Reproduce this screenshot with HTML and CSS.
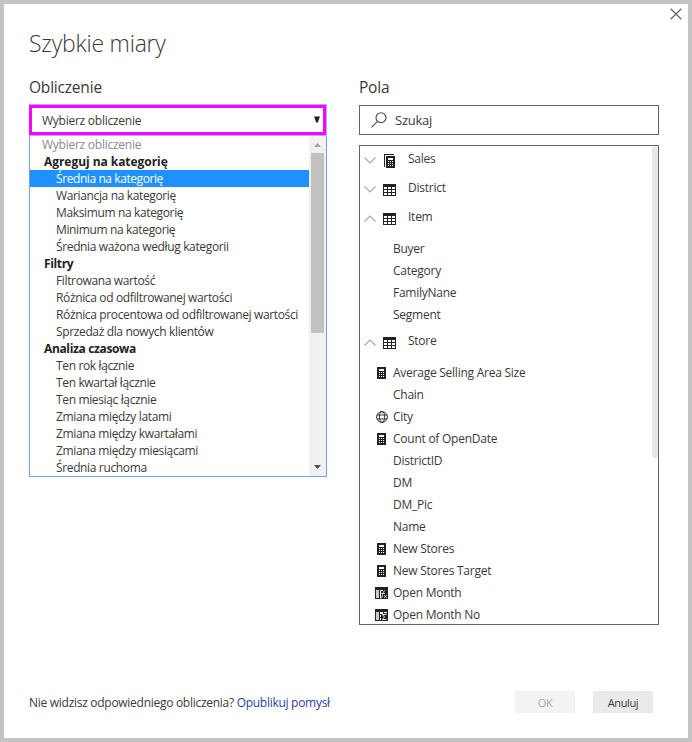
FILE: index.html
```html
<!DOCTYPE html>
<html lang="pl">
<head>
<meta charset="utf-8">
<title>Szybkie miary</title>
<link rel="stylesheet" href="styles.css">
</head>
<body>
<svg class="defs" width="0" height="0" aria-hidden="true">
  <symbol id="calc" viewBox="0 0 9 12"><path fill="#222" d="M0 0h9v12H0z"/><path fill="#fff" d="M2 2h5v2H2zM2 5h1v1H2zM4 5h1v1H4zM6 5h1v1H6zM2 7h1v1H2zM4 7h1v1H4zM6 7h1v1H6zM2 9h1v1H2zM4 9h1v1H4zM6 9h1v1H6z"/></symbol>
  <symbol id="table" viewBox="0 0 13 12"><path fill="#222" d="M0 0h13v12H0z"/><path fill="#fff" d="M1 3h3v2H1zM5 3h3v2H5zM9 3h3v2H9zM1 6h3v2H1zM5 6h3v2H5zM9 6h3v2H9zM1 9h3v2H1zM5 9h3v2H5zM9 9h3v2H9z"/></symbol>
  <symbol id="measures" viewBox="0 0 13 14"><path fill="#222" d="M1 0h10v1H2v12H1zM3 2h9v12H3z"/><path fill="#fff" d="M5 4h5v2H5zM5 7h1v1H5zM7 7h1v1H7zM9 7h1v1H9zM5 9h1v1H5zM7 9h1v1H7zM9 9h1v1H9zM5 11h1v1H5zM7 11h1v1H7zM9 11h1v1H9z"/></symbol>
  <symbol id="down" viewBox="0 0 12 7"><path d="M.5.5 6 6 11.500.5" fill="none" stroke="#aaa" stroke-width="1.200"/></symbol>
  <symbol id="up" viewBox="0 0 12 7"><path d="M.5 6.500 6 1l5.500 5.500" fill="none" stroke="#aaa" stroke-width="1.200"/></symbol>
  <symbol id="globe" viewBox="0 0 12 12"><g fill="none" stroke="#333"><circle cx="6" cy="6" r="5.400"/><ellipse cx="6" cy="6" rx="2.700" ry="5.400"/><path d="M1 4h10M1 8h10"/></g></symbol>
  <symbol id="fx" viewBox="0 0 13 12"><path fill="#222" d="M0 0h13v12H0z"/><path fill="#ccc" d="M1 3h3v8H1z"/><path fill="#fff" d="M5 3h3v1H5zM5 4h1v7H5z"/><path d="M6 11.500q1.300-.5 1.600-4T10 3.500M6.500 6.500H10M9 8l3 3M12 8l-3 3" fill="none" stroke="#ddd" stroke-width=".9"/></symbol>
  <symbol id="sum" viewBox="0 0 13 12"><path fill="#222" d="M0 0h13v12H0z"/><path fill="#ccc" d="M1 3h3v8H1z"/><path fill="#fff" d="M5 3h3v2H5zM9 3h3v1H9zM5 6h1v2H5zM5 9h1v2H5z"/><path d="M11.500 5.500H7.500L9.500 8l-2 2.500h4" fill="none" stroke="#eee"/></symbol>
</svg>
<main class="dialog">
  <button class="close" aria-label="Zamknij"><svg width="12" height="12" viewBox="0 0 12 12"><path d="M.7.7l10.600 10.600M11.300.7.7 11.300" stroke="#666" stroke-width="1.300"/></svg></button>
  <h1>Szybkie miary</h1>
  <div class="columns">
    <section class="calculation">
      <h2>Obliczenie</h2>
      <div class="select-frame"><div class="select"><span>Wybierz obliczenie</span><svg width="6" height="7" viewBox="0 0 6 7"><path d="M0 .5h6L3.800 6.500H2.200z" fill="#222"/></svg></div></div>
      <div class="dropdown">
        <ul class="options">
          <li class="placeholder">Wybierz obliczenie</li>
          <li class="group wide">Agreguj na kategorię</li>
          <li class="selected">Średnia na kategorię</li>
          <li>Wariancja na kategorię</li>
          <li>Maksimum na kategorię</li>
          <li>Minimum na kategorię</li>
          <li>Średnia ważona według kategorii</li>
          <li class="group">Filtry</li>
          <li>Filtrowana wartość</li>
          <li>Różnica od odfiltrowanej wartości</li>
          <li>Różnica procentowa od odfiltrowanej wartości</li>
          <li>Sprzedaż dla nowych klientów</li>
          <li class="group">Analiza czasowa</li>
          <li>Ten rok łącznie</li>
          <li>Ten kwartał łącznie</li>
          <li>Ten miesiąc łącznie</li>
          <li>Zmiana między latami</li>
          <li>Zmiana między kwartałami</li>
          <li>Zmiana między miesiącami</li>
          <li>Średnia ruchoma</li>
        </ul>
        <div class="scrollbar">
          <svg width="7" height="4" viewBox="0 0 7 4"><path d="M0 4 3.500 0 7 4z" fill="#a3a3a3"/></svg>
          <div class="thumb"></div>
          <svg width="7" height="4" viewBox="0 0 7 4"><path d="M0 0h7L3.500 4z" fill="#505050"/></svg>
        </div>
      </div>
    </section>
    <section class="fields">
      <h2>Pola</h2>
      <div class="search"><svg width="16" height="16" viewBox="0 0 16 16"><g fill="none" stroke="#444" stroke-width="1.100"><circle cx="10" cy="5.700" r="5"/><path d="M6.500 9.300.5 15.300"/></g></svg><span>Szukaj</span></div>
      <div class="tree">
        <div class="nodes">
          <div class="node"><svg class="chev"><use href="#down"/></svg><svg class="kind measures"><use href="#measures"/></svg><span>Sales</span></div>
          <div class="node"><svg class="chev"><use href="#down"/></svg><svg class="kind"><use href="#table"/></svg><span>District</span></div>
          <div class="node"><svg class="chev"><use href="#up"/></svg><svg class="kind"><use href="#table"/></svg><span>Item</span></div>
          <ul class="children">
            <li><span>Buyer</span></li>
            <li><span>Category</span></li>
            <li><span>FamilyNane</span></li>
            <li><span>Segment</span></li>
          </ul>
          <div class="node"><svg class="chev"><use href="#up"/></svg><svg class="kind"><use href="#table"/></svg><span>Store</span></div>
          <ul class="children">
            <li><svg class="calc"><use href="#calc"/></svg><span>Average Selling Area Size</span></li>
            <li><span>Chain</span></li>
            <li><svg class="globe"><use href="#globe"/></svg><span>City</span></li>
            <li><svg class="calc"><use href="#calc"/></svg><span>Count of OpenDate</span></li>
            <li><span>DistrictID</span></li>
            <li><span>DM</span></li>
            <li><span>DM_Pic</span></li>
            <li><span>Name</span></li>
            <li><svg class="calc"><use href="#calc"/></svg><span>New Stores</span></li>
            <li><svg class="calc"><use href="#calc"/></svg><span>New Stores Target</span></li>
            <li><svg class="column"><use href="#fx"/></svg><span>Open Month</span></li>
            <li><svg class="column"><use href="#sum"/></svg><span>Open Month No</span></li>
          </ul>
        </div>
        <div class="tree-thumb"></div>
      </div>
    </section>
  </div>
  <footer>
    <p>Nie widzisz odpowiedniego obliczenia? <a>Opublikuj pomysł</a></p>
    <button class="btn ok" disabled>OK</button>
    <button class="btn">Anuluj</button>
  </footer>
</main>
</body>
</html>
```
FILE: styles.css
```css
* { box-sizing: border-box; }
body { margin: 0; font: 12px/17px "Open Sans", "Noto Sans", sans-serif; color: #3a3a3a; letter-spacing: -0.25px; }
svg { display: block; flex: none; }
.defs { position: absolute; }
ul { list-style: none; margin: 0; padding: 0; }
span, li, h1, h2, p { white-space: nowrap; }
button { border: 0; padding: 0; font: inherit; color: inherit; letter-spacing: inherit; }
.dialog { position: relative; display: flex; flex-direction: column; width: 692px; height: 742px; border: 4px solid #c3c3c3; background: #fff; padding: 22px 29px 25px 25px; }
.close { position: absolute; top: 4px; right: 6px; background: none; }
h1 { margin: 0; font-size: 23px; line-height: 34px; font-weight: 300; letter-spacing: -0.22px; }
.columns { display: flex; gap: 32px; margin-top: 14px; }
h2 { margin: 0; height: 30px; font-size: 15.5px; line-height: 26px; font-weight: 400; letter-spacing: -0.2px; }
.calculation { width: 298px; }
.fields { width: 300px; }
.select-frame { height: 32px; border: 1px solid #8fbcea; border-left: 0; }
.select { display: flex; align-items: center; justify-content: space-between; height: 30px; border: 3px solid #f0f; padding: 0 3px 0 10px; }
.select svg { margin-bottom: 1px; }
.dropdown { display: flex; height: 341px; border: 1px solid #7a9fd6; border-top: 0; }
.options { flex: 1; letter-spacing: -0.36px; }
.options li { height: 17px; padding-left: 26px; }
.options .placeholder { padding-left: 12px; color: #8a8a8a; letter-spacing: -0.25px; }
.options .group { padding-left: 14px; font-weight: 700; color: #222; letter-spacing: -0.35px; }
.options .group.wide { letter-spacing: -0.05px; }
.options .selected { background: #1e90ff; color: #fff; letter-spacing: -0.42px; }
.scrollbar { width: 17px; background: #f1f1f1; display: flex; flex-direction: column; align-items: center; padding: 7px 0; }
.thumb { width: 13px; height: 180px; background: #c1c1c1; margin: 6px 0 auto; }
.search { display: flex; align-items: center; height: 30px; margin-top: 1px; border: 1px solid #666; padding-left: 11px; gap: 8px; font-size: 13px; }
.tree { display: flex; height: 480px; margin-top: 10px; border: 1px solid #666; overflow: hidden; }
.nodes { flex: 1; }
.tree-thumb { width: 6px; height: 312px; border-radius: 3px; background: #e8e8e8; }
.node { display: flex; align-items: center; height: 29px; padding-left: 4px; }
.chev { width: 12px; height: 7px; }
.kind { width: 13px; height: 12px; margin: 1px 12px 0 7px; }
.kind.measures { height: 14px; margin-top: 0; }
.node span { padding-bottom: 5px; }
.children { padding: 5px 0 2px; }
.children li { display: grid; grid-template-columns: 33px 1fr; align-items: center; height: 22px; }
.children svg { grid-column: 1; grid-row: 1; }
.children span { grid-column: 2; padding-bottom: 2px; }
.calc { width: 9px; height: 12px; margin-left: 17px; }
.globe { width: 12px; height: 12px; margin-left: 16px; }
.column { width: 13px; height: 12px; margin-left: 15px; }
footer { display: flex; margin-top: auto; height: 22px; }
footer p { margin: 0 auto 0 0; line-height: 23px; letter-spacing: -0.28px; }
footer a { color: #2a3f9d; }
.btn { width: 60px; height: 22px; background: #eaeaea; font-size: 11px; margin-left: 18px; letter-spacing: -0.4px; }
.btn.ok { background: #f3f3f3; color: #aaa; }
.btn:last-child { margin-right: 6px; letter-spacing: -0.55px; }
.btn:last-child { letter-spacing: -0.4px; }
```
